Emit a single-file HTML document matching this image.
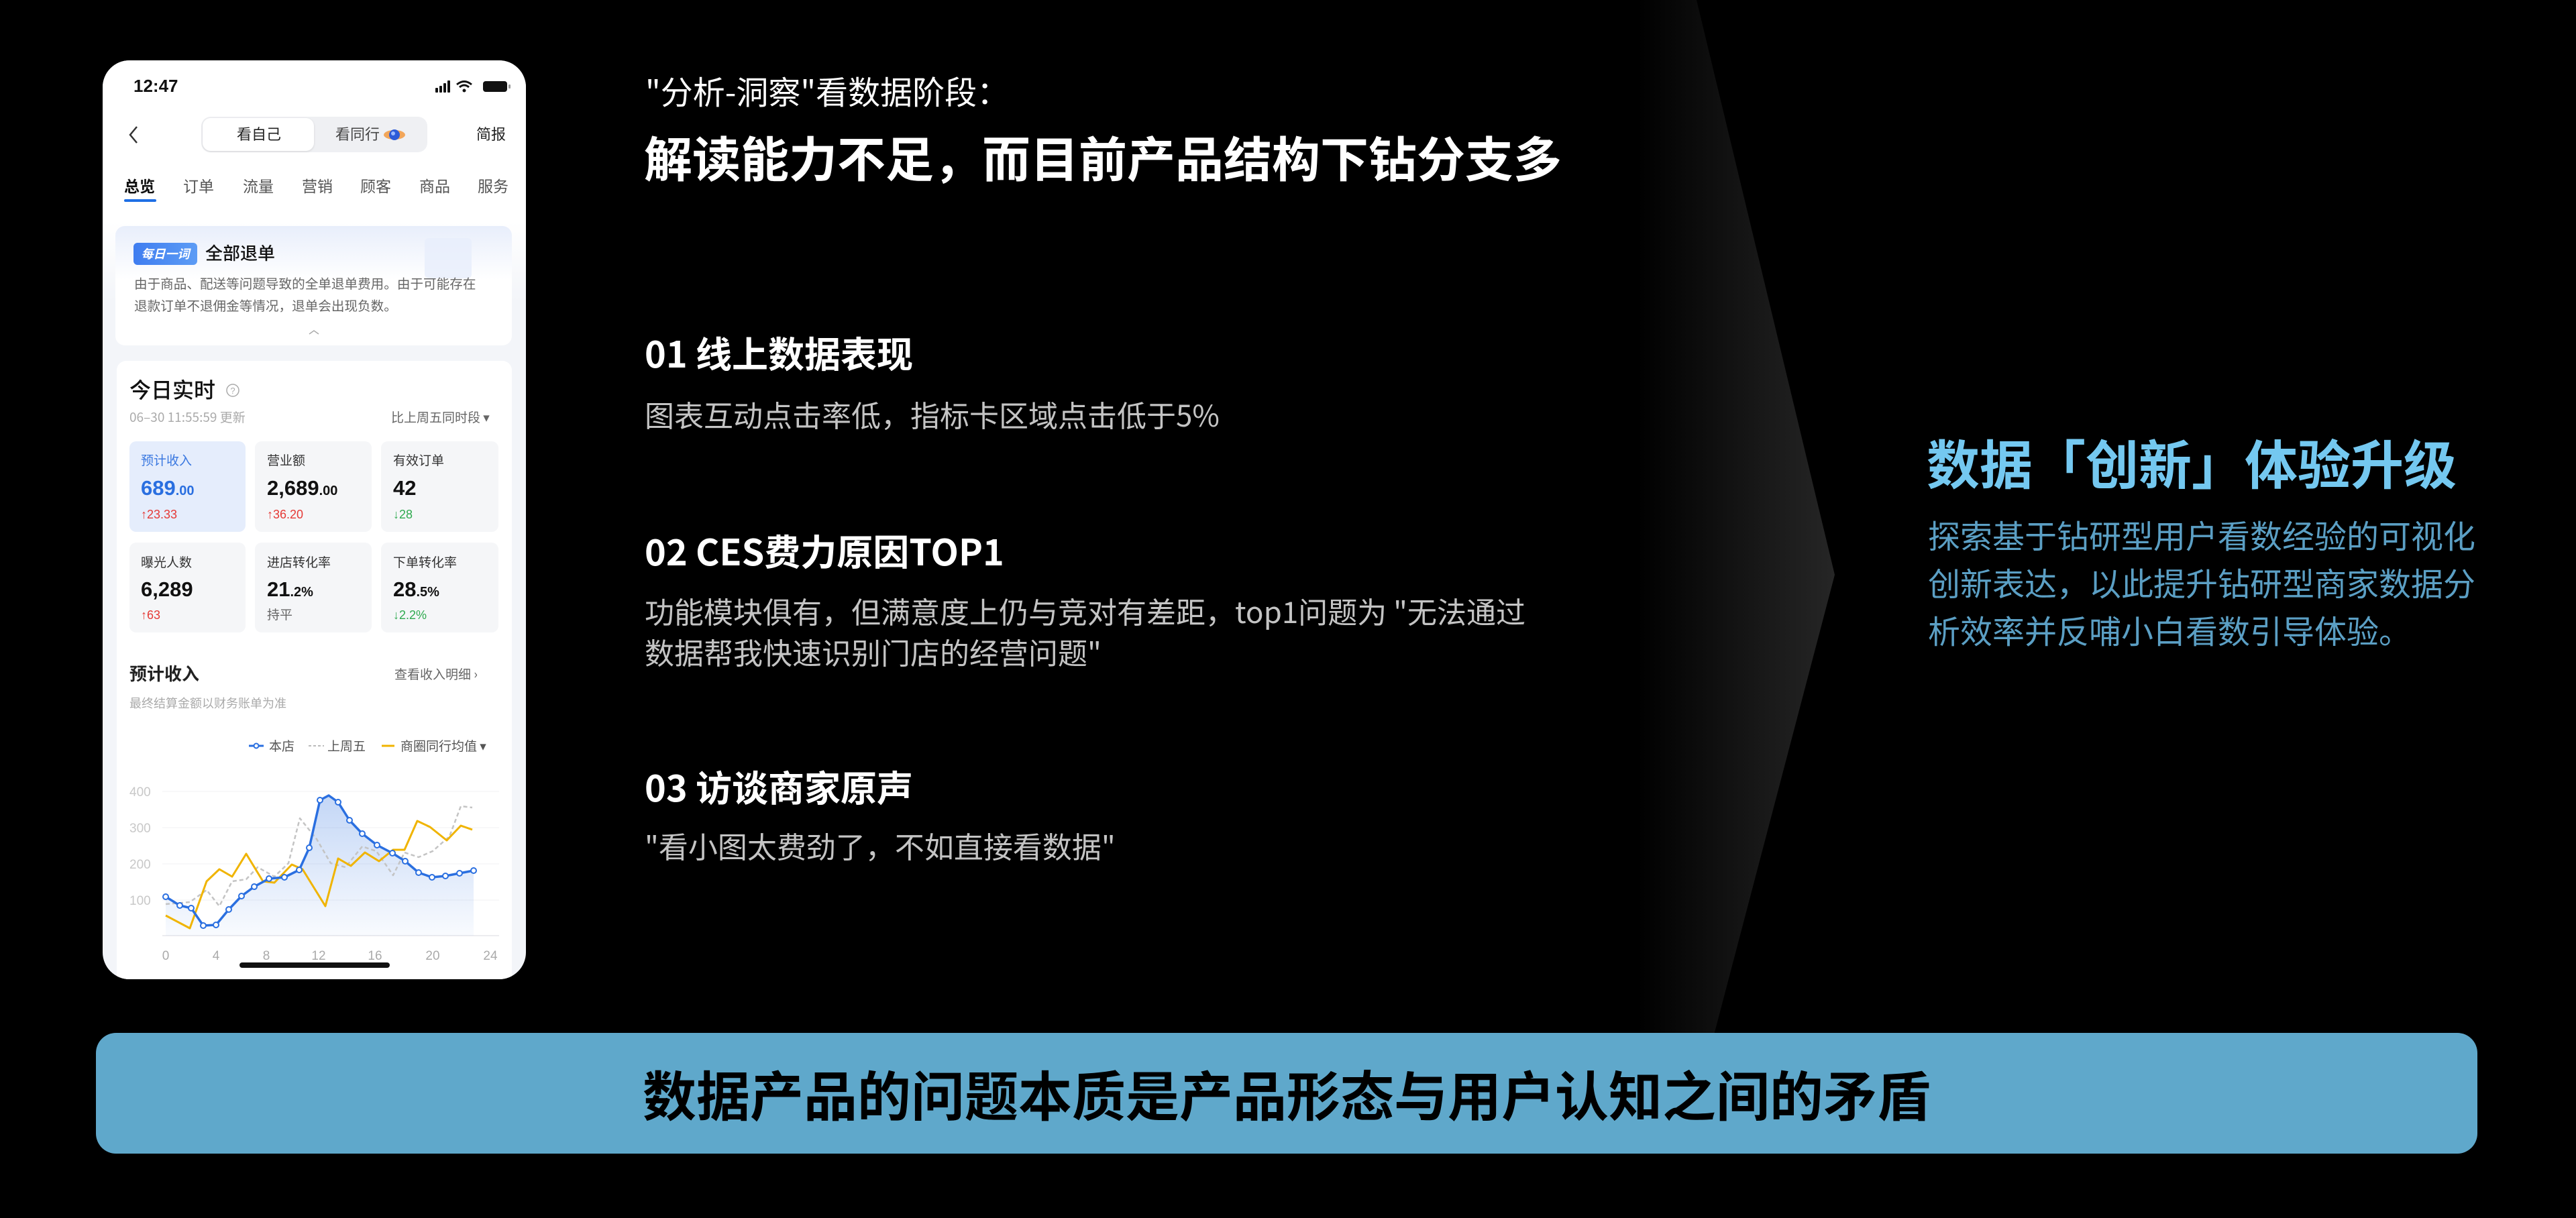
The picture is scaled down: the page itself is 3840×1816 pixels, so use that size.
<!DOCTYPE html>
<html><head><meta charset="utf-8"><style>
*{margin:0;padding:0;box-sizing:border-box}
body{width:3840px;height:1816px;background:#000;position:relative;overflow:hidden;font-family:"Liberation Sans","Noto Sans CJK SC",sans-serif}
.a{position:absolute;white-space:nowrap}
.cj{font-family:"Noto Sans CJK SC","Liberation Sans",sans-serif}
.phone{position:absolute;left:153px;top:90px;width:631px;height:1370px;border-radius:40px;background:#f3f5f9;overflow:hidden}
.phone .a{line-height:1}
.mc{position:absolute;border-radius:10px;background:#f5f6f8}
.lab{font-size:19px;color:#333}
.val{font-size:31px;font-weight:bold;color:#111}
.val small{font-size:20px}
.up{font-size:18px;color:#e53935}
.dn{font-size:18px;color:#2faa4f}
</style></head><body>
<svg class="a" style="left:0;top:0" width="3840" height="1816">
<defs><linearGradient id="g1" x1="2440" y1="0" x2="2735" y2="0" gradientUnits="userSpaceOnUse"><stop offset="0" stop-color="#000"/><stop offset="1" stop-color="#262626"/></linearGradient></defs>
<polygon points="2440,0 2529,0 2735,857 2540,1600 2440,1600" fill="url(#g1)"/>
</svg>

<div class="phone">
 <div class="a" style="left:0;top:0;width:631px;height:240px;background:#fff"></div>
 <div class="a" style="left:0;top:240px;width:631px;height:120px;background:linear-gradient(#fff,#f3f5f9)"></div>
 <div class="a" style="left:46px;top:25px;font-size:26px;font-weight:bold;color:#111">12:47</div>
 <svg class="a" style="left:494px;top:28px" width="116" height="22">
  <rect x="2" y="13" width="4" height="7" rx="1" fill="#111"/><rect x="8" y="10" width="4" height="10" rx="1" fill="#111"/><rect x="14" y="6" width="4" height="14" rx="1" fill="#111"/><rect x="20" y="2" width="4" height="18" rx="1" fill="#111"/>
  <path d="M34 8 Q45 -1 56 8" stroke="#111" stroke-width="3" fill="none"/><path d="M38 12 Q45 6 52 12" stroke="#111" stroke-width="3" fill="none"/><circle cx="45" cy="17" r="2.5" fill="#111"/>
  <rect x="73" y="3" width="36" height="16" rx="4" fill="#111"/><rect x="111" y="8" width="3" height="6" rx="1" fill="#999"/>
 </svg>
 <svg class="a" style="left:36px;top:96px" width="20" height="30"><path d="M15 3 L5 15 L15 27" stroke="#333" stroke-width="2.5" fill="none"/></svg>
 <div class="a" style="left:147px;top:84px;width:337px;height:53px;border-radius:14px;background:#eff0f3"></div>
 <div class="a" style="left:149px;top:86px;width:166px;height:49px;border-radius:12px;background:#fff;box-shadow:0 1px 3px rgba(0,0,0,.12)"></div>
 <div class="a cj" style="left:200px;top:98px;font-size:22px;color:#222">看自己</div>
 <div class="a cj" style="left:347px;top:98px;font-size:22px;color:#444">看同行</div>
 <svg class="a" style="left:418px;top:100px" width="34" height="22"><ellipse cx="17" cy="11" rx="16" ry="7" fill="#f2a65a"/><circle cx="17" cy="11" r="8" fill="#2d5bd8"/><circle cx="15" cy="9" r="3" fill="#9ab8ff"/></svg>
 <div class="a cj" style="left:557px;top:98px;font-size:22px;color:#222">简报</div>
 <div class="a cj" style="left:32px;top:175px;font-size:23px;color:#111;font-weight:bold">总览</div>
 <div class="a cj" style="left:120px;top:175px;font-size:23px;color:#555">订单</div>
 <div class="a cj" style="left:209px;top:175px;font-size:23px;color:#555">流量</div>
 <div class="a cj" style="left:297px;top:175px;font-size:23px;color:#555">营销</div>
 <div class="a cj" style="left:384px;top:175px;font-size:23px;color:#555">顾客</div>
 <div class="a cj" style="left:472px;top:175px;font-size:23px;color:#555">商品</div>
 <div class="a cj" style="left:559px;top:175px;font-size:23px;color:#555">服务</div>
 <div class="a" style="left:32px;top:207px;width:48px;height:4px;border-radius:2px;background:#1f6fe5"></div>

 <div class="a" style="left:19px;top:247px;width:591px;height:178px;border-radius:14px;background:linear-gradient(#e8eefb,#fff 45%)"></div>
 <div class="a" style="left:480px;top:265px;width:70px;height:60px;background:#e7eefb;border-radius:6px;opacity:.8"></div>
 <div class="a cj" style="left:46px;top:272px;width:95px;height:33px;border-radius:6px;background:linear-gradient(90deg,#3f7df0,#5c9cf5);color:#fff;font-size:18px;font-weight:bold;font-style:italic;line-height:33px;text-align:center">每日一词</div>
 <div class="a cj" style="left:153px;top:274px;font-size:26px;color:#111;font-weight:500">全部退单</div>
 <div class="a cj" style="left:47px;top:322px;font-size:19.6px;color:#666">由于商品、配送等问题导致的全单退单费用。由于可能存在</div>
 <div class="a cj" style="left:47px;top:355px;font-size:19.6px;color:#666">退款订单不退佣金等情况，退单会出现负数。</div>
 <svg class="a" style="left:306px;top:400px" width="18" height="10"><path d="M2 8 L9 3 L16 8" stroke="#aaa" stroke-width="1.5" fill="none"/></svg>

 <div class="a" style="left:21px;top:448px;width:589px;height:960px;border-radius:14px;background:#fff"></div>
 <div class="a cj" style="left:40px;top:474px;font-size:32px;color:#111;font-weight:500">今日实时</div>
 <svg class="a" style="left:183px;top:481px" width="22" height="22"><circle cx="11" cy="11" r="9" stroke="#aaa" stroke-width="1.5" fill="none"/><text x="11" y="16" font-size="13" fill="#aaa" text-anchor="middle" font-family="Liberation Sans">?</text></svg>
 <div class="a cj" style="left:40px;top:522px;font-size:19px;color:#aaa">06–30 11:55:59 更新</div>
 <div class="a cj" style="left:430px;top:522px;font-size:19px;color:#666">比上周五同时段 ▾</div>

 <div class="mc" style="left:40px;top:568px;width:173px;height:135px;background:#e5edfc"></div>
 <div class="mc" style="left:227px;top:568px;width:174px;height:135px"></div>
 <div class="mc" style="left:415px;top:568px;width:175px;height:135px"></div>
 <div class="a cj lab" style="left:57px;top:586px;color:#3a78e0">预计收入</div>
 <div class="a val" style="left:57px;top:622px;color:#2a6fe0">689<small>.00</small></div>
 <div class="a up" style="left:57px;top:668px">↑23.33</div>
 <div class="a cj lab" style="left:245px;top:586px">营业额</div>
 <div class="a val" style="left:245px;top:622px">2,689<small>.00</small></div>
 <div class="a up" style="left:245px;top:668px">↑36.20</div>
 <div class="a cj lab" style="left:433px;top:586px">有效订单</div>
 <div class="a val" style="left:433px;top:622px">42</div>
 <div class="a dn" style="left:433px;top:668px">↓28</div>

 <div class="mc" style="left:40px;top:719px;width:173px;height:134px"></div>
 <div class="mc" style="left:227px;top:719px;width:174px;height:134px"></div>
 <div class="mc" style="left:415px;top:719px;width:175px;height:134px"></div>
 <div class="a cj lab" style="left:57px;top:738px">曝光人数</div>
 <div class="a val" style="left:57px;top:773px">6,289</div>
 <div class="a up" style="left:57px;top:818px">↑63</div>
 <div class="a cj lab" style="left:245px;top:738px">进店转化率</div>
 <div class="a val" style="left:245px;top:773px">21<small>.2%</small></div>
 <div class="a cj" style="left:245px;top:816px;font-size:19px;color:#666">持平</div>
 <div class="a cj lab" style="left:433px;top:738px">下单转化率</div>
 <div class="a val" style="left:433px;top:773px">28<small>.5%</small></div>
 <div class="a dn" style="left:433px;top:818px">↓2.2%</div>

 <div class="a cj" style="left:40px;top:901px;font-size:26px;color:#222;font-weight:bold">预计收入</div>
 <div class="a cj" style="left:435px;top:905px;font-size:19px;color:#666">查看收入明细 ›</div>
 <div class="a cj" style="left:40px;top:949px;font-size:18px;color:#aaa">最终结算金额以财务账单为准</div>

 <svg class="a" style="left:0;top:0" width="631" height="1370">
  <g transform="translate(-153,-90)">
   <line x1="371" y1="1112" x2="393" y2="1112" stroke="#2a6fe0" stroke-width="3"/><circle cx="382" cy="1112" r="3.5" fill="#fff" stroke="#2a6fe0" stroke-width="2"/>
   <line x1="460" y1="1112" x2="483" y2="1112" stroke="#bbb" stroke-width="2" stroke-dasharray="4 3"/>
   <line x1="569" y1="1112" x2="588" y2="1112" stroke="#f0b400" stroke-width="3"/>
   <g stroke="#f0f1f3" stroke-width="1"><line x1="242" y1="1180" x2="744" y2="1180"/><line x1="242" y1="1234" x2="744" y2="1234"/><line x1="242" y1="1288" x2="744" y2="1288"/><line x1="242" y1="1342" x2="744" y2="1342"/></g>
   <line x1="242" y1="1395" x2="744" y2="1395" stroke="#e5e6ea" stroke-width="1.5"/>
   <g font-family="Liberation Sans" font-size="19" fill="#c8c8c8"><text x="193" y="1187">400</text><text x="193" y="1241">300</text><text x="193" y="1295">200</text><text x="193" y="1349">100</text></g>
   <g font-family="Liberation Sans" font-size="19" fill="#aaa" text-anchor="middle"><text x="247" y="1431">0</text><text x="322" y="1431">4</text><text x="397" y="1431">8</text><text x="475" y="1431">12</text><text x="559" y="1431">16</text><text x="645" y="1431">20</text><text x="731" y="1431">24</text></g>
   <defs><linearGradient id="bf" x1="0" y1="0" x2="0" y2="1"><stop offset="0" stop-color="#2a6fe0" stop-opacity=".28"/><stop offset="1" stop-color="#2a6fe0" stop-opacity=".03"/></linearGradient></defs>
   <polygon fill="url(#bf)" points="247,1337 268,1350 285,1354 303,1380 322,1379 341,1356 360,1336 379,1322 401,1310 424,1308 446,1297 461,1264 477,1193 490,1186 504,1196 521,1223 540,1243 562,1260 585,1272 604,1284 624,1301 644,1308 664,1306 685,1302 706,1298 706,1395 247,1395"/>
   <polyline fill="none" stroke="#c4c4c4" stroke-width="2.5" stroke-dasharray="6 4" stroke-linejoin="round" points="247,1348 283,1345 308,1327 327,1351 346,1314 367,1311 384,1293 409,1307 430,1287 447,1220 472,1251 493,1287 515,1293 540,1262 561,1269 586,1305 603,1271 624,1278 645,1269 670,1247 687,1202 704,1204"/>
   <polyline fill="none" stroke="#f0b400" stroke-width="3" stroke-linejoin="round" points="247,1365 283,1384 308,1314 327,1296 346,1307 367,1273 392,1314 409,1316 435,1289 451,1296 485,1351 504,1280 523,1291 544,1271 565,1284 586,1267 603,1267 622,1224 641,1233 666,1253 687,1231 704,1237"/>
   <polyline fill="none" stroke="#2a6fe0" stroke-width="3.5" stroke-linejoin="round" points="247,1337 268,1350 285,1354 303,1380 322,1379 341,1356 360,1336 379,1322 401,1310 424,1308 446,1297 461,1264 477,1193 490,1186 504,1196 521,1223 540,1243 562,1260 585,1272 604,1284 624,1301 644,1308 664,1306 685,1302 706,1298"/>
   <g fill="#fff" stroke="#2a6fe0" stroke-width="2"><circle cx="247" cy="1337" r="4"/><circle cx="268" cy="1350" r="4"/><circle cx="285" cy="1354" r="4"/><circle cx="303" cy="1380" r="4"/><circle cx="322" cy="1379" r="4"/><circle cx="341" cy="1356" r="4"/><circle cx="360" cy="1336" r="4"/><circle cx="379" cy="1322" r="4"/><circle cx="401" cy="1310" r="4"/><circle cx="424" cy="1308" r="4"/><circle cx="446" cy="1297" r="4"/><circle cx="461" cy="1264" r="4"/><circle cx="477" cy="1193" r="4"/><circle cx="504" cy="1196" r="4"/><circle cx="521" cy="1223" r="4"/><circle cx="540" cy="1243" r="4"/><circle cx="562" cy="1260" r="4"/><circle cx="585" cy="1272" r="4"/><circle cx="604" cy="1284" r="4"/><circle cx="624" cy="1301" r="4"/><circle cx="644" cy="1308" r="4"/><circle cx="664" cy="1306" r="4"/><circle cx="685" cy="1302" r="4"/><circle cx="706" cy="1298" r="4"/></g>
   <rect x="357" y="1435" width="224" height="8" rx="4" fill="#111"/>
  </g>
 </svg>
 <div class="a cj" style="left:248px;top:1012px;font-size:19px;color:#555">本店</div>
 <div class="a cj" style="left:335px;top:1012px;font-size:19px;color:#555">上周五</div>
 <div class="a cj" style="left:444px;top:1012px;font-size:19px;color:#555">商圈同行均值 ▾</div>
</div>

<div class="a cj" style="left:962px;top:106px;font-size:48px;line-height:1.2;color:#fff">"分析-洞察"看数据阶段：</div>
<div class="a cj" style="left:960px;top:190px;font-size:72px;line-height:1.2;color:#fff;font-weight:bold">解读能力不足，而目前产品结构下钻分支多</div>

<div class="a cj" style="left:961px;top:493px;font-size:54px;line-height:1.2;color:#fff;font-weight:bold">01 线上数据表现</div>
<div class="a cj" style="left:961px;top:591px;font-size:44px;line-height:1.2;color:#c4c4c4">图表互动点击率低，指标卡区域点击低于5%</div>

<div class="a cj" style="left:961px;top:788px;font-size:54px;line-height:1.2;color:#fff;font-weight:bold">02 CES费力原因TOP1</div>
<div class="a cj" style="left:961px;top:880px;font-size:44px;line-height:61px;color:#c4c4c4;white-space:normal;width:1400px">功能模块俱有，但满意度上仍与竞对有差距，top1问题为 "无法通过<br>数据帮我快速识别门店的经营问题"</div>

<div class="a cj" style="left:961px;top:1140px;font-size:54px;line-height:1.2;color:#fff;font-weight:bold">03 访谈商家原声</div>
<div class="a cj" style="left:961px;top:1234px;font-size:44px;line-height:1.2;color:#c4c4c4">"看小图太费劲了，不如直接看数据"</div>

<div class="a cj" style="left:2872px;top:641px;font-size:79px;line-height:1.2;color:#74c8f0;font-weight:bold">数据「创新」体验升级</div>
<div class="a cj" style="left:2874px;top:761px;font-size:48px;line-height:71px;color:#5b9fc4">探索基于钻研型用户看数经验的可视化<br>创新表达，以此提升钻研型商家数据分<br>析效率并反哺小白看数引导体验。</div>

<div class="a" style="left:143px;top:1540px;width:3550px;height:180px;border-radius:30px;background:#5fa8cb"></div>
<div class="a cj" style="left:143px;top:1582px;width:3550px;text-align:center;font-size:80px;line-height:1.2;color:#000;font-weight:bold">数据产品的问题本质是产品形态与用户认知之间的矛盾</div>
</body></html>
